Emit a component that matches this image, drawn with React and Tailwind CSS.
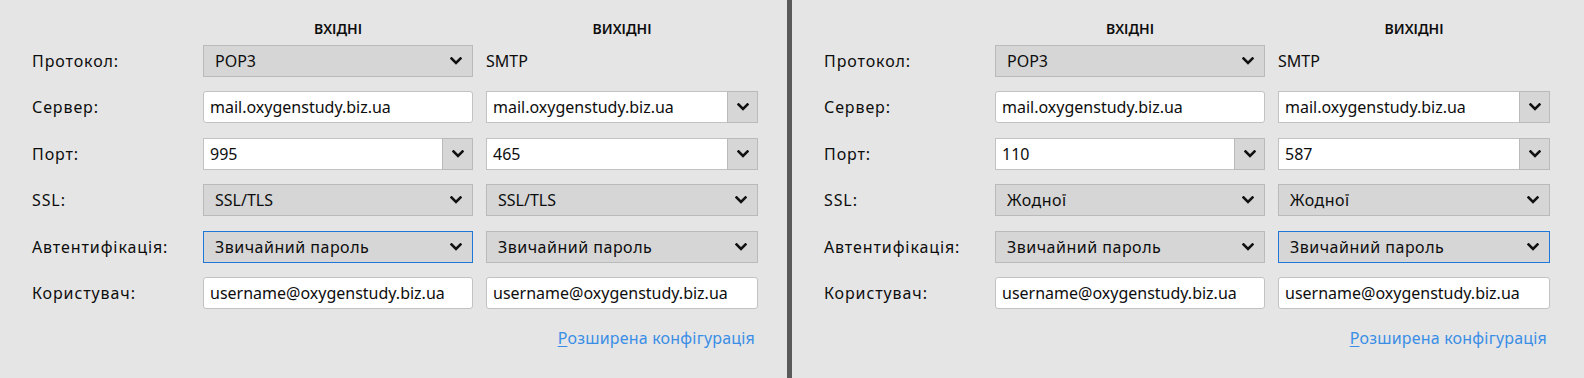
import React from "react";

function Chevron() {
  return (
    <svg width="12" height="8" viewBox="0 0 12 8" className="shrink-0">
      <polyline
        points="1.5,1.5 6,6 10.5,1.5"
        fill="none"
        stroke="#111"
        strokeWidth="2.6"
        strokeLinecap="square"
      />
    </svg>
  );
}

function Select({ value, focused, wide }) {
  return (
    <div
      className={
        "h-8 flex items-center justify-between pl-[11px] pr-[10px] bg-[#d6d6d6] border " +
        (focused ? "border-[#1f78d8]" : "border-[#bababa]")
      }
    >
      <span className={wide ? "tracking-[0.5px]" : ""}>{value}</span>
      <Chevron />
    </div>
  );
}

function TextInput({ value }) {
  return (
    <div className="h-8 flex items-center px-[6px] bg-white border border-[#c2c2c2] rounded-[3px]">
      {value}
    </div>
  );
}

function Combo({ value }) {
  return (
    <div className="h-8 flex">
      <div className="flex-1 flex items-center px-[6px] bg-white border border-r-0 border-[#c2c2c2]">
        {value}
      </div>
      <div className="w-[31px] flex items-center justify-center bg-[#d6d6d6] border border-[#bababa]">
        <Chevron />
      </div>
    </div>
  );
}

function Panel({ data }) {
  const rows = [
    {
      label: "Протокол:",
      inc: <Select value="POP3" />,
      out: <div className="h-8 flex items-center">SMTP</div>,
    },
    {
      label: "Сервер:",
      inc: <TextInput value="mail.oxygenstudy.biz.ua" />,
      out: <Combo value="mail.oxygenstudy.biz.ua" />,
    },
    {
      label: "Порт:",
      inc: <Combo value={data.portIn} />,
      out: <Combo value={data.portOut} />,
    },
    {
      label: "SSL:",
      inc: <Select value={data.ssl} wide={data.ssl !== "SSL/TLS"} />,
      out: <Select value={data.ssl} wide={data.ssl !== "SSL/TLS"} />,
    },
    {
      label: "Автентифікація:",
      inc: <Select value="Звичайний пароль" wide focused={data.focus === "in"} />,
      out: <Select value="Звичайний пароль" wide focused={data.focus === "out"} />,
    },
    {
      label: "Користувач:",
      inc: <TextInput value="username@oxygenstudy.biz.ua" />,
      out: <TextInput value="username@oxygenstudy.biz.ua" />,
    },
  ];

  return (
    <div className="h-full pl-8 pt-[18px] text-[16px] text-[#0d0d0d]">
      <div className="grid grid-cols-[158px_270px_272px] gap-x-[13px] mb-[7px] h-5 items-center text-[14px] font-semibold">
        <div></div>
        <div className="text-center">ВХІДНІ</div>
        <div className="text-center">ВИХІДНІ</div>
      </div>
      <div className="grid grid-cols-[158px_270px_272px] gap-x-[13px] gap-y-[14.4px]">
        {rows.map((r, i) => (
          <React.Fragment key={i}>
            <div className="h-8 flex items-center tracking-[0.9px]">{r.label}</div>
            {r.inc}
            {r.out}
          </React.Fragment>
        ))}
      </div>
      <div className="w-[723px] flex justify-end mt-[18px] h-[22px] items-center">
        <span className="text-[#3a8ee6] cursor-pointer tracking-[0.2px]">
          <span className="underline underline-offset-2">Р</span>озширена конфігурація
        </span>
      </div>
    </div>
  );
}

export default function App() {
  return (
    <div
      className="w-[1584px] h-[378px] flex bg-[#e5e5e5] overflow-hidden"
      style={{ fontFamily: '"Noto Sans", "Open Sans", sans-serif' }}
    >
      <div className="w-[787px] h-full">
        <Panel data={{ portIn: "995", portOut: "465", ssl: "SSL/TLS", focus: "in" }} />
      </div>
      <div className="w-[5px] h-full bg-[#5a5a5a]"></div>
      <div className="flex-1 h-full">
        <Panel data={{ portIn: "110", portOut: "587", ssl: "Жодної", focus: "out" }} />
      </div>
    </div>
  );
}
